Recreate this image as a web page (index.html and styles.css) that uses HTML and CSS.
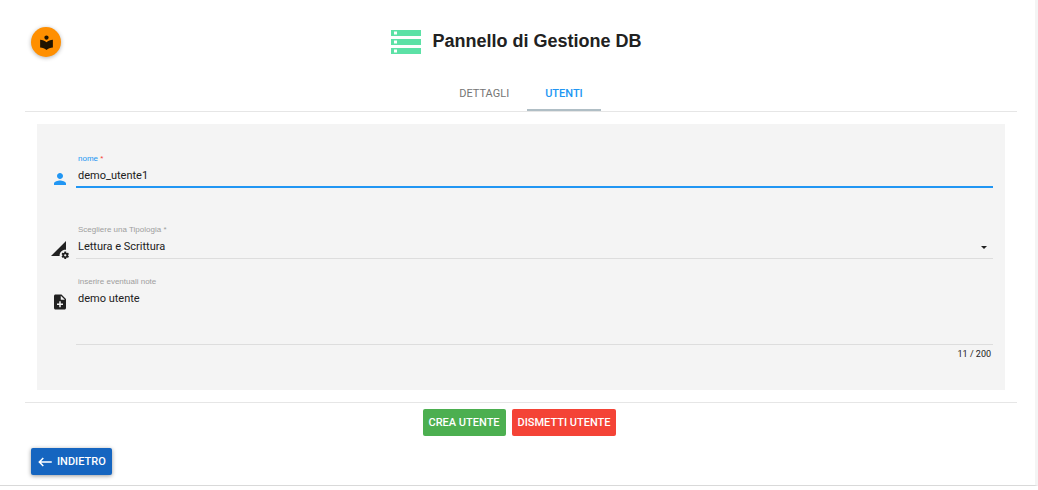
FILE: index.html
```html
<!DOCTYPE html>
<html lang="it">
<head>
<meta charset="utf-8">
<meta name="viewport" content="width=device-width, initial-scale=1">
<title>Pannello di Gestione DB</title>
<link rel="stylesheet" href="styles.css">
</head>
<body>
<main class="page">
  <header class="header">
    <button class="guide" type="button" aria-label="Guida">
      <svg viewBox="0 0 24 24"><path d="M12 11.55C9.64 9.35 6.48 8 3 8v11c3.48 0 6.64 1.35 9 3.55 2.36-2.19 5.52-3.55 9-3.55V8c-3.48 0-6.64 1.35-9 3.55zM12 8c1.66 0 3-1.34 3-3s-1.34-3-3-3-3 1.34-3 3 1.34 3 3 3z"/></svg>
    </button>
    <div class="heading">
      <svg class="heading-icon" viewBox="0 0 24 24"><path d="M2 20h20v-4H2v4zm2-3h2v2H4v-2zM2 4v4h20V4H2zm4 3H4V5h2v2zm-4 7h20v-4H2v4zm2-3h2v2H4v-2z"/></svg>
      <h1 class="title">Pannello di Gestione DB</h1>
    </div>
  </header>

  <nav class="tabs">
    <button class="tab" type="button">DETTAGLI</button>
    <button class="tab tab-active" type="button">UTENTI</button>
  </nav>

  <form class="panel" id="utente">
    <div class="row row-name">
      <svg class="icon icon-blue" viewBox="0 0 24 24"><path d="M12 12c2.21 0 4-1.79 4-4s-1.79-4-4-4-4 1.79-4 4 1.79 4 4 4zm0 2c-2.67 0-8 1.34-8 4v2h16v-2c0-2.66-5.33-4-8-4z"/></svg>
      <div class="field field-focus">
        <label class="label label-blue" for="nome">nome <span class="required">*</span></label>
        <input class="control control-focus" id="nome" type="text" value="demo_utente1">
      </div>
    </div>
    <div class="row row-type">
      <svg class="icon" viewBox="0 0 24 24"><path d="M18.99 11.5c.34 0 .67.03 1 .07L20 0 0 20h11.56c-.04-.33-.07-.66-.07-1 0-4.14 3.36-7.5 7.5-7.5zm3.71 7.99c.02-.16.04-.32.04-.49 0-.17-.01-.33-.04-.49l1.06-.83c.09-.08.12-.21.06-.32l-1-1.73c-.06-.11-.19-.15-.31-.11l-1.24.5c-.26-.2-.54-.37-.85-.49l-.19-1.32c-.01-.12-.12-.21-.24-.21h-2c-.12 0-.23.09-.25.21l-.19 1.32c-.3.13-.59.29-.85.49l-1.24-.5c-.11-.04-.24 0-.31.11l-1 1.73c-.06.11-.04.24.06.32l1.06.83c-.02.16-.03.32-.03.49 0 .17.01.33.03.49l-1.06.83c-.09.08-.12.21-.06.32l1 1.73c.06.11.19.15.31.11l1.24-.5c.26.2.54.37.85.49l.19 1.32c.02.12.12.21.25.21h2c.12 0 .23-.09.25-.21l.19-1.32c.3-.13.59-.29.84-.49l1.25.5c.11.04.24 0 .31-.11l1-1.73c.06-.11.03-.24-.06-.32l-1.07-.83zm-3.71 1.01c-.83 0-1.5-.67-1.5-1.5s.67-1.5 1.5-1.5 1.5.67 1.5 1.5-.67 1.5-1.5 1.5z"/></svg>
      <div class="field">
        <label class="label" for="tipologia">Scegliere una Tipologia *</label>
        <div class="select-line">
          <select class="control control-select" id="tipologia">
            <option>Lettura e Scrittura</option>
          </select>
          <svg class="caret" viewBox="0 0 6 3"><path d="M0 0h6L3 3z"/></svg>
        </div>
      </div>
    </div>
    <div class="row">
      <svg class="icon" viewBox="0 0 24 24"><path d="M14 2H6c-1.100 0-1.990.9-1.990 2L4 20c0 1.100.89 2 1.990 2H18c1.100 0 2-.9 2-2V8l-6-6zm2 14h-3v3h-2v-3H8v-2h3v-3h2v3h3v2zm-3-7V3.500L18.500 9H13z"/></svg>
      <div class="notes">
        <div class="field">
          <label class="label" for="note">inserire eventuali note</label>
          <textarea class="control control-notes" id="note">demo utente</textarea>
        </div>
        <div class="counter">11 / 200</div>
      </div>
    </div>
  </form>

  <div class="actions">
    <button class="button button-green" type="submit" form="utente">CREA UTENTE</button>
    <button class="button button-red" type="button">DISMETTI UTENTE</button>
  </div>

  <footer class="footer">
    <button class="button button-back" type="button">
      <svg class="arrow" viewBox="0 0 24 24"><path d="M21 11H6.830l3.580-3.590L9 6l-6 6 6 6 1.410-1.410L6.830 13H21z"/></svg>
      INDIETRO
    </button>
  </footer>
</main>
</body>
</html>
```
FILE: styles.css
```css
* {
  box-sizing: border-box;
}

body {
  margin: 0;
  background: #fff;
  color: #212121;
  font-family: Roboto, "Liberation Sans", sans-serif;
  font-size: 11px;
}

button {
  margin: 0;
  border: 0;
  font: inherit;
  cursor: pointer;
}

svg {
  display: block;
  flex: none;
  fill: currentColor;
}

.page {
  padding: 0 18px 10px 25px;
  border-right: 3px solid #f4f4f4;
  border-bottom: 1px solid #d9d9d9;
}

.header {
  display: grid;
  grid-template-columns: 30px 1fr 42px;
  align-items: center;
  padding: 24px 6px 21px;
}

.guide {
  display: grid;
  place-items: center;
  width: 30px;
  height: 30px;
  padding: 0;
  border-radius: 50%;
  background: #ff8f00;
  color: #1f1400;
  box-shadow: 0 1px 4px rgba(0, 0, 0, 0.3);
}

.guide svg {
  width: 17px;
  height: 17px;
}

.heading {
  display: flex;
  align-items: center;
  justify-content: center;
  gap: 8px;
}

.heading-icon {
  width: 36px;
  height: 36px;
  color: #5ce1a6;
}

.title {
  margin: 0;
  padding-bottom: 2px;
  font: bold 18px/20px "Liberation Sans", Arial, sans-serif;
}

.tabs {
  display: flex;
  justify-content: center;
  border-bottom: 1px solid #e6e6e6;
}

.tab {
  padding: 6px 18px 8px;
  border-bottom: 2px solid transparent;
  background: none;
  color: #757575;
  line-height: 14px;
}

.tab-active {
  border-bottom-color: #b0bec5;
  color: #2196f3;
  font-weight: 500;
}

.panel {
  display: flex;
  flex-direction: column;
  margin: 12px;
  padding: 29px 12px;
  background: #f4f4f4;
}

.row {
  display: flex;
  gap: 7px;
}

.row-name {
  margin-bottom: 36px;
}

.row-type {
  margin-bottom: 17px;
}

.icon {
  width: 18px;
  height: 18px;
  margin: 17px 0 0 2px;
}

.icon-blue {
  color: #2196f3;
}

.field {
  display: flex;
  flex: 1;
  flex-direction: column;
  padding-left: 2px;
  border-bottom: 1px solid #ddd;
}

.field-focus {
  border-bottom: 2px solid #2196f3;
}

.label {
  color: #9e9e9e;
  font: 8px/12px "Liberation Sans", Arial, sans-serif;
}

.label-blue {
  color: #2196f3;
}

.required {
  color: #f44336;
}

.control {
  width: 100%;
  height: 22px;
  margin: 0;
  padding: 0;
  border: 0;
  outline: 0;
  background: none;
  color: inherit;
  font: 11px/22px Roboto, "Liberation Sans", sans-serif;
}

.control-focus {
  height: 21px;
}

.control-select {
  appearance: none;
}

.select-line {
  display: flex;
  align-items: center;
}

.caret {
  width: 6px;
  height: 3px;
  margin-right: 6px;
}

.notes {
  flex: 1;
}

.control-notes {
  height: 56px;
  resize: none;
}

.counter {
  padding: 2px 2px 0 0;
  font-size: 9px;
  line-height: 14px;
  text-align: right;
}

.actions {
  display: flex;
  justify-content: center;
  gap: 6px;
  padding: 6px 3px 12px 0;
  border-top: 1px solid #e6e6e6;
}

.button {
  padding: 0 6px;
  border-radius: 2px;
  color: #fff;
  font-weight: 500;
  line-height: 27px;
}

.button-green {
  background: #4caf50;
}

.button-red {
  background: #f44336;
}

.footer {
  padding-left: 6px;
}

.button-back {
  display: flex;
  align-items: center;
  gap: 3px;
  padding-left: 5px;
  background: #1565c0;
  box-shadow: 0 1px 4px rgba(0, 0, 0, 0.4);
}

.arrow {
  width: 18px;
  height: 18px;
}
```
